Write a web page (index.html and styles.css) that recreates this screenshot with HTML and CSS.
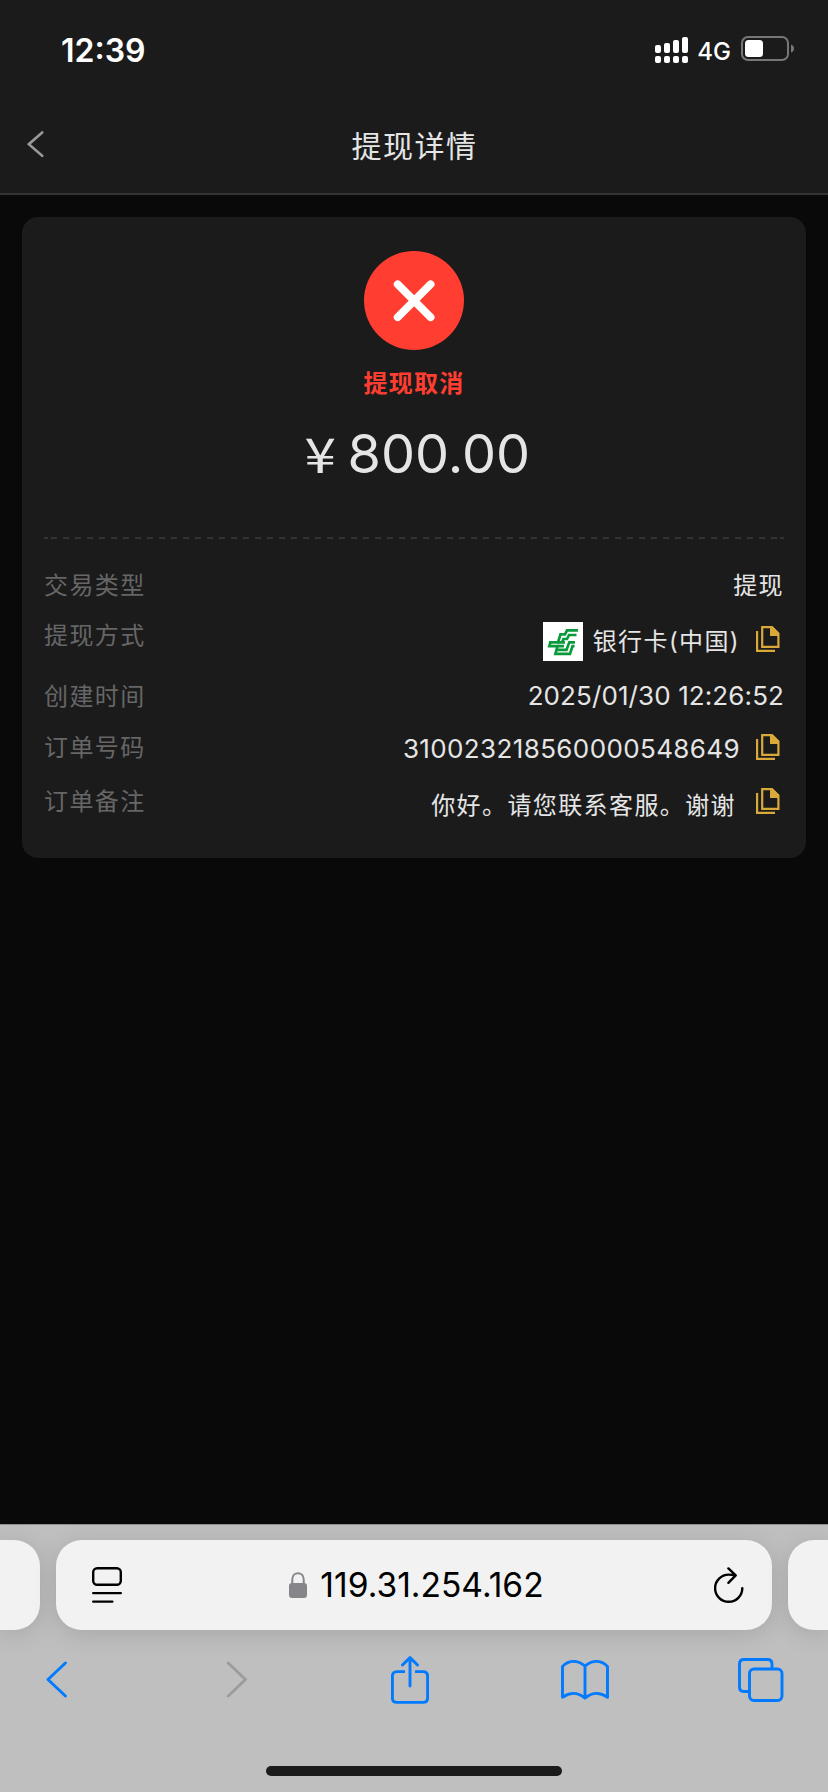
FILE: index.html
```html
<!DOCTYPE html>
<html lang="zh-CN">
<head>
<meta charset="utf-8">
<title>提现详情</title>
<link rel="stylesheet" href="styles.css">
</head>
<body>
<svg width="0" height="0" class="defs">
  <symbol id="copy" viewBox="0 0 24 26">
    <path d="M6.2 1.2H16L22.4 7.5V20.9H6.2Z" fill="none" stroke="#d9aa3a" stroke-width="2.2"/>
    <path d="M14 1H17L23 7V10H14Z" fill="#d9aa3a"/>
    <path d="M1.1 5V24.9H19" fill="none" stroke="#d9aa3a" stroke-width="2.2"/>
  </symbol>
</svg>
<header class="top">
  <div class="status">
    <span class="clock">12:39</span>
    <div class="status-right">
      <svg class="signal" width="34" height="26" viewBox="0 0 34 26" fill="#fff">
        <rect x="0" y="8" width="6" height="8" rx="2"/><rect x="9" y="6" width="6" height="10" rx="2"/><rect x="18" y="3" width="6" height="13" rx="2"/><rect x="27" y="0" width="6" height="16" rx="2"/>
        <rect x="0" y="19" width="6" height="7" rx="2"/><rect x="9" y="19" width="6" height="7" rx="2"/><rect x="18" y="19" width="6" height="7" rx="2"/><rect x="27" y="19" width="6" height="7" rx="2"/>
      </svg>
      <span class="network">4G</span>
      <svg class="battery" width="54" height="26" viewBox="0 0 54 26">
        <rect x="1" y="1" width="46" height="23" rx="6" fill="none" stroke="#777" stroke-width="2"/>
        <rect x="4" y="4" width="18" height="17" rx="3.5" fill="#fff"/>
        <path d="M50 8.5Q53 9.5 53 12.5T50 16.5Z" fill="#777"/>
      </svg>
    </div>
  </div>
  <nav class="nav">
    <svg class="nav-back" width="18" height="28" viewBox="0 0 18 28" fill="none" stroke="#999" stroke-width="2.6" stroke-linecap="round"><path d="M15.2 2.4L1.8 14.2L15.2 25.8"/></svg>
    <h1 class="title">提现详情</h1>
  </nav>
</header>
<main class="page">
  <section class="card">
    <div class="summary">
      <svg class="cross" width="100" height="99" viewBox="0 0 100 99"><ellipse cx="50" cy="49.5" rx="50" ry="49.5" fill="#ff3e31"/><path d="M33.7 33.3L66.6 66.2M66.6 33.3L33.7 66.2" stroke="#fff" stroke-width="7.8" stroke-linecap="round"/></svg>
      <p class="state">提现取消</p>
      <p class="amount"><span class="yen">¥</span><span class="figure">800.00</span></p>
    </div>
    <div class="divider"></div>
    <dl class="details">
      <div class="row row-type"><dt>交易类型</dt><dd>提现</dd></div>
      <div class="row row-method"><dt>提现方式</dt><dd>
        <svg class="bank" width="40" height="39" viewBox="0 0 40 39"><rect width="40" height="39" fill="#fff"/>
          <g fill="none" stroke="#0a9a3c" stroke-width="2.7">
            <path d="M35 8.3H24L22 12.3H17.5L15 20.3H7.3L6.3 24.2H14.5L12.4 31.8H27L29.5 24.2H31.5"/>
            <path d="M33.5 13H26L24 17H20.5L19 20.3M32 20.3H26.3L23.5 27.8H14M14.5 24.2H21M15 20.3H22"/>
          </g></svg>
        <span class="text">银行卡(中国)</span><svg class="copy"><use href="#copy"/></svg></dd></div>
      <div class="row row-time"><dt>创建时间</dt><dd><span class="date">2025/01/30 12:26:52</span></dd></div>
      <div class="row row-number"><dt>订单号码</dt><dd><span class="text number">310023218560000548649</span><svg class="copy"><use href="#copy"/></svg></dd></div>
      <div class="row row-note"><dt>订单备注</dt><dd><span class="text note">你好。请您联系客服。谢谢</span><svg class="copy"><use href="#copy"/></svg></dd></div>
    </dl>
  </section>
</main>
<footer class="browser">
  <div class="tabs">
    <div class="tab tab-prev"></div>
    <div class="tab tab-current">
      <svg class="reader" width="30" height="36" viewBox="0 0 30 36" fill="none" stroke="#000" stroke-width="2.4" stroke-linecap="round"><rect x="1.2" y="1.2" width="27.6" height="16.6" rx="4"/><path d="M1.2 26.1H28.8M1.2 34.6H20.4"/></svg>
      <div class="address">
        <svg width="18" height="26" viewBox="0 0 18 26"><rect y="11" width="18" height="15" rx="3" fill="#85858a"/><path d="M3.3 12V7.5C3.3-1 14.7-1 14.7 7.5V12" fill="none" stroke="#85858a" stroke-width="2"/></svg>
        <span class="ip">119.31.254.162</span>
      </div>
      <svg class="reload" width="30" height="36" viewBox="0 0 30 36" fill="none" stroke="#000" stroke-width="2.4" stroke-linecap="round" stroke-linejoin="round"><path d="M28.3 21.2A13.6 13.6 0 1 1 14.7 7.6Q18 7.6 21.2 8.4M14.4 1.4L21.7 8.4L14.4 15.8"/></svg>
    </div>
    <div class="tab tab-next"></div>
  </div>
  <div class="tools">
    <svg viewBox="0 0 22 38" width="22" height="38"><path d="M19.4 2L2 18.5L19.4 35"/></svg>
    <svg class="forward" viewBox="0 0 22 38" width="22" height="38"><path d="M2.2 2L19.5 18.5L2.2 35"/></svg>
    <svg class="share" viewBox="0 0 38 48" width="38" height="48"><path stroke-linecap="butt" d="M14 15.6H6Q1.4 15.6 1.4 20V42Q1.4 46.4 6 46.4H32Q36.6 46.4 36.6 42V20Q36.6 15.6 32 15.6H24"/><path d="M19 30V2M11.5 9L19 1.6L26.5 9"/></svg>
    <svg class="book" viewBox="0 0 48 40" width="48" height="40"><path d="M24 6Q18.5 1.4 12.5 1.4T1.5 6.5V37.3Q7 33.4 12.5 33.4T24 38Q30 33.4 35.5 33.4T46.5 37.3V6.5Q41.5 1.4 35.5 1.4T24 6V38"/></svg>
    <svg class="pages" viewBox="0 0 46 44" width="46" height="44"><path d="M10.5 33.5H6Q1.5 33.5 1.5 29V6Q1.5 1.5 6 1.5H29.5Q34 1.5 34 6V10.5"/><rect x="11.5" y="11" width="32.5" height="31.5" rx="4.5"/></svg>
  </div>
  <div class="home"></div>
</footer>
</body>
</html>
```
FILE: styles.css
```css
* { box-sizing: border-box; }
body {
  margin: 0;
  width: 828px;
  height: 1792px;
  display: flex;
  flex-direction: column;
  overflow: hidden;
  background: #090909;
  color: #e5e5e5;
  font-family: Inter, "Noto Sans CJK SC", sans-serif;
}
h1, p, dl, dd { margin: 0; font-weight: 400; }
svg { display: block; flex: none; }
.defs { position: absolute; }

.top { height: 195px; flex: none; background: #1b1b1b; border-bottom: 2px solid #333; }
.status { height: 98px; padding: 0 33px 0 61px; display: flex; justify-content: space-between; align-items: center; color: #fff; }
.clock { font-size: 32px; font-weight: 600; padding-top: 2px; }
.status-right { display: flex; align-items: center; }
.network { font-size: 24px; font-weight: 500; margin: 4px 10px 0 8px; }
.signal { margin-top: 2px; }
.nav { height: 95px; display: grid; grid-template-columns: 100px 1fr 100px; align-items: center; }
.nav-back { margin: -3px 0 0 27px; }
.title { text-align: center; font-size: 30px; letter-spacing: 1.5px; margin-top: -4px; padding-left: 1px; }

.page { flex: 1; padding: 22px; }
.card { height: 641px; padding: 34px 22px 0; border-radius: 16px; background: #1b1b1b; }
.summary { display: flex; flex-direction: column; align-items: center; height: 286px; }
.state { margin-top: 14px; height: 40px; line-height: 40px; font-size: 24px; font-weight: 700; letter-spacing: 1.3px; color: #ff3e31; }
.amount { margin-top: 18px; height: 60px; display: flex; align-items: baseline; line-height: 60px; padding-left: 9px; }
.yen { font-family: "Noto Sans CJK SC", sans-serif; font-size: 48px; transform: scaleX(1.18); }
.figure { font-size: 54px; margin-left: 14px; }
.divider {
  height: 2px;
  background:
    linear-gradient(#333, #333) 0 0 / 4px 2px no-repeat,
    linear-gradient(#333, #333) 100% 0 / 4px 2px no-repeat,
    repeating-linear-gradient(90deg, #333 0 6px, transparent 6px 12px) 7px 0 / 726px 2px no-repeat;
}
.details { padding-top: 27px; font-size: 24px; letter-spacing: 1.4px; }
.row { display: flex; justify-content: space-between; align-items: flex-start; line-height: 40px; }
dt { color: #666; }
dd { display: flex; }
.copy { width: 24px; height: 26px; margin: 6px 4px 0 16px; }
.row-type { height: 50px; }
.row-method { height: 61px; line-height: 52px; }
.row-method dt, .row-number dt, .row-note dt { line-height: 40px; }
.row-method .copy { margin-top: 10px; }
.bank { margin: 6px 10px 0 0; }
.row-time { height: 51px; }
.row-time dd { line-height: 38px; }
.row-number { height: 54px; line-height: 41px; }
.row-note { line-height: 48px; }
.date, .number { font-size: 26px; letter-spacing: 0.38px; }
.date { letter-spacing: 0.1px; }
.note { margin-right: 4px; }

.browser { height: 268px; flex: none; background: #bfbfbf; border-top: 1px solid #8f8f8f; }
.tabs { height: 105px; padding-top: 15px; display: grid; grid-template-columns: 40px 716px 40px; gap: 16px; }
.tab { height: 90px; background: #f2f2f2; border-radius: 26px; box-shadow: 0 4px 24px rgba(0, 0, 0, .13); }
.tab-prev { border-radius: 0 26px 26px 0; }
.tab-next { border-radius: 26px 0 0 26px; }
.tab-current { padding: 0 28px 0 36px; display: flex; align-items: center; justify-content: space-between; color: #000; }
.address { display: flex; align-items: center; gap: 13px; margin-right: 3px; }
.ip { font-size: 33.6px; line-height: 40px; }
.tools { height: 99px; padding-left: 46px; display: flex; align-items: center; fill: none; stroke: #007aff; stroke-width: 2.9; stroke-linecap: round; stroke-linejoin: round; }
.forward { stroke: #9c9c9c; margin-left: 158px; }
.share { margin-left: 143px; }
.book { margin-left: 132px; }
.pages { margin-left: 129px; }
.home { width: 296px; height: 10px; margin: 37px auto 0; border-radius: 5px; background: #1b1b1b; }
```
